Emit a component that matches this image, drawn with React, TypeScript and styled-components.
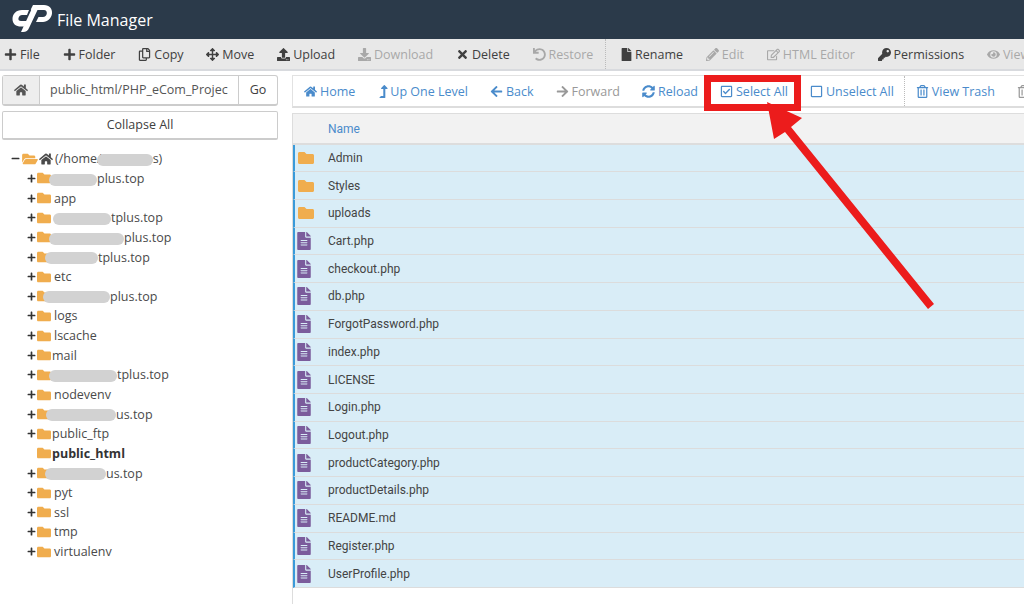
import React from 'react';
import styled, { createGlobalStyle } from 'styled-components';
import {
  FaPlus, FaMinus, FaRegCopy, FaArrowsAlt, FaUpload, FaDownload, FaTimes, FaUndo, FaFile,
  FaPencilAlt, FaRegEdit, FaKey, FaEye, FaHome, FaLevelUpAlt, FaArrowLeft, FaArrowRight,
  FaSyncAlt, FaRegCheckSquare, FaRegSquare, FaRegTrashAlt, FaFolder, FaFolderOpen, FaFileAlt,
} from 'react-icons/fa';

const COLORS = {
  header: '#2b3a4a',
  bar: '#e8e8e8',
  border: '#d4d4d4',
  text: '#404040',
  muted: '#a8a8a8',
  link: '#4a8bcb',
  folder: '#f0ad4e',
  file: '#7b5c9c',
  selected: '#d9edf7',
  red: '#ec1c1c',
};

const GlobalStyle = createGlobalStyle`
  html, body { margin: 0; padding: 0; background: #fff; }
  body { font-family: "Open Sans", "Liberation Sans", sans-serif; color: ${COLORS.text}; }
`;

const Page = styled.div`
  position: relative;
  width: 1024px;
  height: 604px;
  overflow: hidden;
`;

const Header = styled.header`
  height: 39px;
  background: ${COLORS.header};
  display: flex;
  align-items: center;
  padding-left: 12px;
  gap: 4px;
  color: #fff;
  font-size: 16px;
`;

const Toolbar = styled.div`
  height: 30px;
  background: ${COLORS.bar};
  border-bottom: 2px solid #d8dade;
  display: flex;
  align-items: center;
  white-space: nowrap;
`;

const ToolButton = styled.span<{ $disabled?: boolean; $first?: boolean }>`
  display: inline-flex;
  align-items: center;
  gap: 3px;
  padding: 0 11.4px 0 ${(p) => (p.$first ? '4px' : '11.4px')};
  font-size: 12.5px;
  color: ${(p) => (p.$disabled ? COLORS.muted : COLORS.text)};
  svg { width: auto; height: 13px; }
`;

const RenameIcon = styled(FaFile)`
  margin-right: -1px;
`;

const Divider = styled.span`
  align-self: stretch;
  border-left: 1px dotted #bbb;
  margin-right: 3px;
`;

const Main = styled.div`
  display: flex;
  height: 533px;
`;

const Sidebar = styled.aside`
  width: 292px;
  flex: none;
  padding: 4px 14px 0 2px;
  box-sizing: border-box;
`;

const PathGroup = styled.div`
  height: 31px;
  display: flex;
  border: 1px solid #ccc;
  border-bottom-width: 2px;
  border-radius: 3px;
  box-sizing: border-box;
  font-size: 12.5px;
`;

const PathAddon = styled.span`
  width: 36px;
  background: #eee;
  display: flex;
  align-items: center;
  justify-content: center;
  color: #555;
  font-size: 14px;
`;

const PathInput = styled.span`
  flex: 1;
  border-left: 1px solid #ccc;
  border-right: 1px solid #ccc;
  padding-left: 10px;
  line-height: 28px;
  overflow: hidden;
  white-space: nowrap;
  color: #555;
`;

const GoButton = styled.span`
  width: 38px;
  text-align: center;
  line-height: 28px;
`;

const CollapseButton = styled.div`
  height: 29px;
  margin-top: 5px;
  border: 1px solid #ccc;
  border-bottom-width: 2px;
  border-radius: 2px;
  box-sizing: border-box;
  text-align: center;
  line-height: 26px;
  font-size: 12.5px;
`;

const Tree = styled.ul`
  list-style: none;
  margin: 9px 0 0;
  padding: 0;
`;

const TreeRow = styled.li<{ $root?: boolean }>`
  height: 19.65px;
  display: flex;
  align-items: center;
  padding-left: ${(p) => (p.$root ? '9px' : '25px')};
  font-size: 12.5px;
  color: #4a4a4a;
  white-space: nowrap;
`;

const Toggle = styled.span`
  width: 10px;
  flex: none;
  display: inline-flex;
  font-size: 9px;
  color: #333;
  svg { width: auto; height: 9px; }
`;

const TreeFolder = styled(FaFolder)`
  width: 14px;
  height: 14px;
  flex: none;
  color: ${COLORS.folder};
  margin-right: 3px;
`;

const RootFolder = styled(FaFolderOpen)`
  width: 16px;
  height: 14px;
  flex: none;
  color: ${COLORS.folder};
  margin: 0 1px;
`;

const RootHome = styled(FaHome)`
  width: 14px;
  height: 14px;
  flex: none;
  margin-right: 2px;
`;

const TreeLabel = styled.span<{ $bold?: boolean; $tight?: boolean }>`
  font-weight: ${(p) => (p.$bold ? 700 : 400)};
  margin-left: ${(p) => (p.$tight ? '-2px' : '0')};
  color: ${(p) => (p.$bold ? '#333' : 'inherit')};
`;

// the grey scribbles hiding the account name in the screenshot
const Scribble = styled.span<{ $width: number; $shift?: number }>`
  display: inline-block;
  vertical-align: middle;
  width: ${(p) => p.$width}px;
  height: 12px;
  margin-left: ${(p) => p.$shift ?? -5}px;
  border-radius: 6px;
  background: #d2d2d2;
  position: relative;
`;

const Content = styled.section`
  flex: 1;
  min-width: 0;
  padding-top: 4px;
`;

const NavBar = styled.div`
  height: 33px;
  border: 1px solid #e2e2e2;
  border-bottom: 2px solid #ddd;
  border-right: 0;
  box-sizing: border-box;
  display: flex;
  align-items: center;
  white-space: nowrap;
`;

const NavButton = styled.span<{ $disabled?: boolean }>`
  display: inline-flex;
  align-items: center;
  gap: 3px;
  padding: 0 11px;
  font-size: 12.5px;
  color: ${(p) => (p.$disabled ? '#999' : COLORS.link)};
  svg { width: auto; height: 13px; }
`;

const UpIcon = styled(FaLevelUpAlt)`
  margin-right: -3px;
`;

const NavDivider = styled.span`
  align-self: stretch;
  border-left: 1px dotted #bbb;
  margin-left: -1px;
`;

const Table = styled.div`
  margin-top: 5px;
  border-left: 1px solid #ddd;
  height: 491px;
  font-family: Roboto, "Liberation Sans", sans-serif;
  font-size: 12px;
`;

const TableHead = styled.div`
  height: 31.5px;
  background: #f2f2f2;
  border-top: 1px solid #ddd;
  border-bottom: 2px solid #ddd;
  box-sizing: border-box;
  display: flex;
  align-items: center;
  padding: 1px 0 0 35px;
  color: ${COLORS.link};
`;

const FileRow = styled.div`
  height: 27.73px;
  box-sizing: border-box;
  background: ${COLORS.selected};
  border-left: 2px solid #3a9ad9;
  border-bottom: 1px solid #dcdcdc;
  display: flex;
  align-items: center;
  color: #444;
`;

const IconCell = styled.span`
  width: 33px;
  flex: none;
  display: flex;
  padding-left: 2px;
  box-sizing: border-box;
`;

const FolderIcon = styled(FaFolder)`
  width: 18px;
  height: 16px;
  color: ${COLORS.folder};
`;

const FileIcon = styled(FaFileAlt)`
  width: 14px;
  height: 18px;
  color: ${COLORS.file};
`;

const Highlight = styled.div`
  position: absolute;
  left: 704px;
  top: 75px;
  width: 97px;
  height: 36px;
  border: 7px solid ${COLORS.red};
  box-sizing: border-box;
`;

const ArrowLayer = styled.svg`
  position: absolute;
  inset: 0;
  width: 1024px;
  height: 604px;
  pointer-events: none;
`;

const PRIMARY_TOOLS: [React.ReactNode, string, boolean?][] = [
  [<FaPlus />, 'Folder'],
  [<FaRegCopy />, 'Copy'],
  [<FaArrowsAlt />, 'Move'],
  [<FaUpload />, 'Upload'],
  [<FaDownload />, 'Download', true],
  [<FaTimes />, 'Delete'],
  [<FaUndo />, 'Restore', true],
];

const SECONDARY_TOOLS: [React.ReactNode, string, boolean?][] = [
  [<RenameIcon />, 'Rename'],
  [<FaPencilAlt />, 'Edit', true],
  [<FaRegEdit />, 'HTML Editor', true],
  [<FaKey />, 'Permissions'],
  [<FaEye />, 'View', true],
];

const NAV_ITEMS: [React.ReactNode, string, boolean?][] = [
  [<FaHome />, 'Home'],
  [<UpIcon />, 'Up One Level'],
  [<FaArrowLeft />, 'Back'],
  [<FaArrowRight />, 'Forward', true],
  [<FaSyncAlt />, 'Reload'],
  [<FaRegCheckSquare />, 'Select All'],
  [<FaRegSquare />, 'Unselect All'],
];

type TreeItem = { name?: string; hidden?: number; shift?: number; suffix?: string; tight?: boolean; bold?: boolean; leaf?: boolean };

const TREE: TreeItem[] = [
  { hidden: 48, suffix: 'plus.top' },
  { name: 'app' },
  { hidden: 58, shift: -1, suffix: 'tplus.top' },
  { hidden: 75, suffix: 'plus.top' },
  { hidden: 53, shift: -9, suffix: 'tplus.top' },
  { name: 'etc' },
  { hidden: 67, shift: -11, suffix: 'plus.top' },
  { name: 'logs' },
  { name: 'lscache' },
  { name: 'mail', tight: true },
  { hidden: 68, suffix: 'tplus.top' },
  { name: 'nodevenv' },
  { hidden: 70, shift: -8, suffix: 'us.top' },
  { name: 'public_ftp', tight: true },
  { name: 'public_html', tight: true, bold: true, leaf: true },
  { hidden: 61, shift: -9, suffix: 'us.top' },
  { name: 'pyt' },
  { name: 'ssl' },
  { name: 'tmp' },
  { name: 'virtualenv' },
];

const FOLDERS = ['Admin', 'Styles', 'uploads'];
const FILES = [
  'Cart.php', 'checkout.php', 'db.php', 'ForgotPassword.php', 'index.php', 'LICENSE', 'Login.php',
  'Logout.php', 'productCategory.php', 'productDetails.php', 'README.md', 'Register.php', 'UserProfile.php',
];

function Logo() {
  return (
    <svg width="41" height="29" viewBox="12 4 41 29" fill="#fff" style={{ marginBottom: 2 }}>
      <path d="M29 10H22C16 10 12.500 14 12.500 19C12.500 24 16 26.500 21 26.500H24L27 21H21C19 21 18 20 18.500 18C19 16 20.500 15 22 15H27Z" />
      <path d="M33 5H44C49.500 5 52.500 9 52 13.500C51.500 18 47.500 22 43 22H36L38.500 17H43C45 17 46.500 15.500 46.800 13.500C47 11.500 46 10 44 10H37.500L29 28C28 30.500 26 32 23 32H21L31 10.500C31.500 9.500 31 9 30 9H31Z" />
    </svg>
  );
}

export default function App() {
  return (
    <Page>
      <GlobalStyle />
      <Header>
        <Logo />
        <span>File Manager</span>
      </Header>
      <Toolbar>
        <ToolButton $first>
          <FaPlus />
          File
        </ToolButton>
        {PRIMARY_TOOLS.map(([icon, label, disabled]) => (
          <ToolButton key={label} $disabled={disabled}>
            {icon}
            {label}
          </ToolButton>
        ))}
        <Divider />
        {SECONDARY_TOOLS.map(([icon, label, disabled]) => (
          <ToolButton key={label} $disabled={disabled}>
            {icon}
            {label}
          </ToolButton>
        ))}
      </Toolbar>
      <Main>
        <Sidebar>
          <PathGroup>
            <PathAddon>
              <FaHome />
            </PathAddon>
            <PathInput>public_html/PHP_eCom_Projec</PathInput>
            <GoButton>Go</GoButton>
          </PathGroup>
          <CollapseButton>Collapse All</CollapseButton>
          <Tree>
            <TreeRow $root>
              <Toggle>
                <FaMinus />
              </Toggle>
              <RootFolder />
              <RootHome />
              <span>
                (/home/
                <Scribble $width={56} $shift={-5} />
                s)
              </span>
            </TreeRow>
            {TREE.map((item, i) => (
              <TreeRow key={i}>
                <Toggle>{!item.leaf && <FaPlus />}</Toggle>
                <TreeFolder />
                <TreeLabel $bold={item.bold} $tight={item.tight}>
                  {item.hidden ? <Scribble $width={item.hidden} $shift={item.shift} /> : null}
                  {item.suffix ?? item.name}
                </TreeLabel>
              </TreeRow>
            ))}
          </Tree>
        </Sidebar>
        <Content>
          <NavBar>
            {NAV_ITEMS.map(([icon, label, disabled]) => (
              <NavButton key={label} $disabled={disabled}>
                {icon}
                {label}
              </NavButton>
            ))}
            <NavDivider />
            <NavButton>
              <FaRegTrashAlt />
              View Trash
            </NavButton>
            <NavButton $disabled>
              <FaRegTrashAlt />
              Empty Trash
            </NavButton>
          </NavBar>
          <Table>
            <TableHead>Name</TableHead>
            {FOLDERS.map((name) => (
              <FileRow key={name}>
                <IconCell>
                  <FolderIcon />
                </IconCell>
                {name}
              </FileRow>
            ))}
            {FILES.map((name) => (
              <FileRow key={name}>
                <IconCell>
                  <FileIcon />
                </IconCell>
                {name}
              </FileRow>
            ))}
          </Table>
        </Content>
      </Main>
      <Highlight />
      <ArrowLayer viewBox="0 0 1024 604">
        <polygon points="767,102 802,118 791,127 934,304 928,309 785,132 774,139" fill={COLORS.red} />
      </ArrowLayer>
    </Page>
  );
}
